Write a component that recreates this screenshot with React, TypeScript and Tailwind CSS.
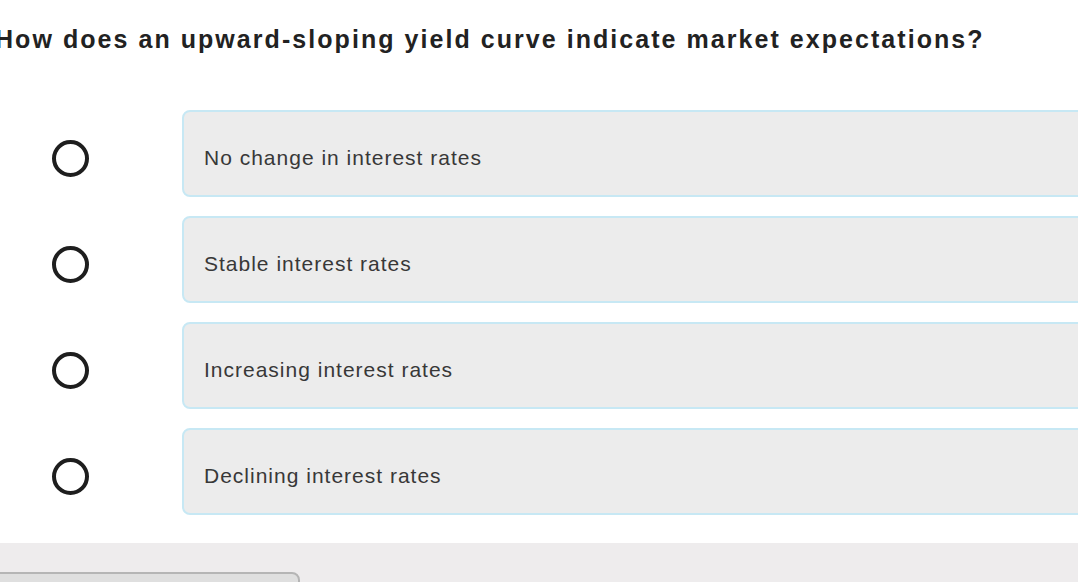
const options = [
  "No change in interest rates",
  "Stable interest rates",
  "Increasing interest rates",
  "Declining interest rates",
]

export default function App() {
  return (
    <div className="w-[1078px] h-[582px] overflow-hidden bg-white font-['Liberation_Sans',Arial,sans-serif]">
      <div className="pt-[24px] -ml-[5px]">
        <h1 className="text-[25px] leading-[30px] font-bold tracking-[2.05px] text-[#222] whitespace-nowrap">
          How does an upward-sloping yield curve indicate market expectations?
        </h1>
      </div>

      <div className="mt-[56px] flex flex-col gap-[19px]">
        {options.map((opt) => (
          <div key={opt} className="flex items-center">
            <div className="w-[182px] flex pt-[10px]">
              <div className="w-[37px] h-[37px] ml-[52px] rounded-full border-[4px] border-[#1e1e1e]" />
            </div>
            <div className="flex-1 h-[87px] -mr-[20px] flex items-center pl-[20px] pt-[9px] bg-[#ececec] border-2 border-[#c7e8f4] rounded-[8px]">
              <span className="text-[21px] tracking-[1px] text-[#383838]">{opt}</span>
            </div>
          </div>
        ))}
      </div>

      <div className="mt-[28px] h-[60px] bg-[#eeeced] pt-[29px]">
        <div className="w-[308px] h-[40px] bg-[#dfdfdf] border-2 border-[#b5b5b5] rounded-[8px] -ml-[8px]" />
      </div>
    </div>
  )
}
